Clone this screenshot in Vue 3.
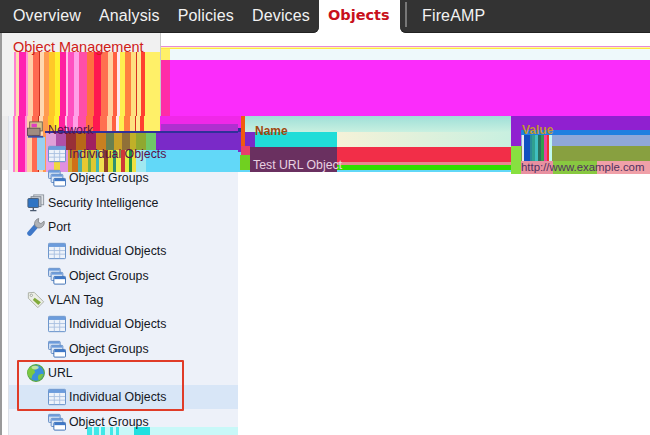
<template>
  <div class="page">
    <nav class="topbar">
      <div class="nav-left">
        <a class="tab">Overview</a>
        <a class="tab">Analysis</a>
        <a class="tab">Policies</a>
        <a class="tab">Devices</a>
      </div>
      <a class="tab-active">Objects</a>
      <div class="nav-right">
        <span class="divider"></span>
        <a class="tab">FireAMP</a>
      </div>
    </nav>

    <div class="head-row">
      <div class="title-box">
        <div class="title-stripes" :style="{ background: stripeBg(titleStripes) }"></div>
        <h1>Object Management</h1>
      </div>
      <div class="banner">
        <div class="banner-line"></div>
        <div class="banner-pale"></div>
        <div class="banner-fill"></div>
      </div>
    </div>

    <div class="main-row">
      <aside class="sidebar">
        <div class="tree-glitch" :style="{ background: stripeBg(titleStripes) }">
          <div class="glitch-right"></div>
          <div class="glitch-blue"></div>
          <div class="glitch-mid" :style="{ background: stripeBg(midStripes) }"></div>
          <div class="glitch-low" :style="{ background: stripeBg(lowStripes) }"></div>
          <div class="glitch-side"></div>
        </div>
        <div class="foot-glitch" :style="{ background: stripeBg(footStripes) }"></div>
        <div
          v-for="row in rows"
          :key="row.id"
          class="tree-row"
          :class="{ child: row.child, selected: row.selected, garbled: row.garbled }"
        >
          <svg class="icon" viewBox="0 0 20 20">
            <template v-if="row.icon === 'table'">
              <rect x="0.5" y="1.500" width="19" height="17" rx="1" fill="#eef3fa" stroke="#5584c4" />
              <rect x="1" y="2" width="18" height="3.500" fill="#6c9cdc" />
              <path d="M7 6v12M13 6v12M1 9.500h18M1 13.500h18" stroke="#a8c0e0" fill="none" />
            </template>
            <template v-else-if="row.icon === 'groups'">
              <rect x="0.5" y="1.500" width="13" height="9" rx="1" fill="#cfdef2" stroke="#5a86c2" />
              <rect x="1" y="2" width="12" height="2" fill="#6c9cdc" />
              <rect x="3.500" y="6" width="13" height="9" rx="1" fill="#dfe9f6" stroke="#5a86c2" />
              <rect x="4" y="6.500" width="12" height="2" fill="#6c9cdc" />
              <rect x="6.500" y="10.500" width="13" height="8.500" rx="1" fill="#fff" stroke="#2f66b0" />
              <rect x="7" y="11" width="12" height="2.500" fill="#3f78c8" />
            </template>
            <template v-else-if="row.icon === 'network'">
              <rect x="3" y="1" width="14" height="10" fill="#d8c48a" stroke="#6b5a4a" />
              <rect x="5" y="3" width="6" height="4" fill="#e040c0" />
              <rect x="0.5" y="8" width="14" height="8" fill="#a08c80" stroke="#5a4a50" />
              <path d="M1 17.500h17" stroke="#3a4fa8" stroke-width="2" />
            </template>
            <template v-else-if="row.icon === 'security'">
              <rect x="7.500" y="1" width="11" height="11" fill="#e0e3e8" stroke="#8a929c" />
              <rect x="4.500" y="3" width="11" height="11" fill="#c8cdd5" stroke="#7c848e" />
              <rect x="1" y="5" width="12" height="10" rx="1" fill="#2f74c4" stroke="#4a5a70" />
              <path d="M7 15v3M3.500 18.500h7" stroke="#4a5a70" stroke-width="1.500" />
            </template>
            <template v-else-if="row.icon === 'port'">
              <path d="M3 17 L11 8" stroke="#3f78c8" stroke-width="5.500" stroke-linecap="round" />
              <path d="M9 9 a6 6 0 0 1 4 -8.500 l-.5 4 3 1.800 3.500 -2.800 a6 6 0 0 1 -7 7.500z" fill="#b0b3b8" stroke="#77797d" stroke-width="0.800" />
            </template>
            <template v-else-if="row.icon === 'tag'">
              <path d="M1.500 2 L8 1.500 L18.500 12 L12 18.500 L1.500 8z" fill="#eceee6" stroke="#a8ada2" />
              <path d="M8.500 7.500 L15.500 12.500 L12.500 15.500 L6.500 10z" fill="#82ab3c" />
              <circle cx="4.800" cy="4.800" r="1.300" fill="#fff" stroke="#9a9f94" />
            </template>
            <template v-else>
              <circle cx="10" cy="10" r="9.300" fill="#3a90dc" stroke="#5aa838" stroke-width="1.200" />
              <path d="M4 3.500c3-2 6-2 8-1l-1 3-3 1 1 3-3 3-1 4c-3-2-4.500-5-4.500-8 0-2 2-4 3.500-5z" fill="#7cc840" />
              <path d="M13 12c2-1 4-1 5-1-.5 3-2.500 6-5 7-1-2-1-4 0-6z" fill="#7cc840" />
              <ellipse cx="9" cy="4" rx="4" ry="2" fill="#d8f0c8" opacity="0.7" />
            </template>
          </svg>
          <span>{{ row.label }}</span>
        </div>
        <div class="callout"></div>
      </aside>

      <section class="table-area">
        <div class="col-name">
          <div class="edge-orange"></div>
          <div class="edge-red"></div>
          <div class="edge-green"></div>
          <div class="band-teal">
            <strong class="th-name">Name</strong>
          </div>
          <div class="band-block">
            <div class="block-cyan"></div>
            <div class="block-cream"></div>
          </div>
          <div class="band-red"></div>
          <div class="band-row"></div>
          <div class="block-maroon">
            <span class="cell-name">Test URL Object</span>
          </div>
        </div>
        <div class="col-value">
          <div class="value-top"></div>
          <div class="value-blue"></div>
          <div class="value-mid">
            <div class="value-stripes" :style="{ background: stripeBg(valueStripes) }"></div>
            <strong class="th-value">Value</strong>
          </div>
          <div class="value-row">
            <span>http://www.example.com</span>
          </div>
        </div>
      </section>
    </div>
  </div>
</template>

<script setup>
const rows = [
  { id: 1, label: 'Network', icon: 'network', garbled: true },
  { id: 2, label: 'Individual Objects', icon: 'table', child: true, garbled: true },
  { id: 3, label: 'Object Groups', icon: 'groups', child: true },
  { id: 4, label: 'Security Intelligence', icon: 'security' },
  { id: 5, label: 'Port', icon: 'port' },
  { id: 6, label: 'Individual Objects', icon: 'table', child: true },
  { id: 7, label: 'Object Groups', icon: 'groups', child: true },
  { id: 8, label: 'VLAN Tag', icon: 'tag' },
  { id: 9, label: 'Individual Objects', icon: 'table', child: true },
  { id: 10, label: 'Object Groups', icon: 'groups', child: true },
  { id: 11, label: 'URL', icon: 'globe' },
  { id: 12, label: 'Individual Objects', icon: 'table', child: true, selected: true },
  { id: 13, label: 'Object Groups', icon: 'groups', child: true }
]

// [width, colour] pairs read off the reference, left to right
const titleStripes = [
  [2, '#ff7fd0'], [3, '#ffd9b0'], [7, '#ff22b0'], [2, '#ff90d8'], [5, '#ffd0a8'],
  [6, '#ff6a50'], [1, '#c83020'], [4, '#ffd8b0'], [5, '#ff9a50'], [6, '#ffc828'],
  [5, '#fff030'], [6, '#ff20a0'], [2, '#ffc0e8'], [6, '#ff50c0'], [5, '#ffa0e8'],
  [8, '#ff4ea8'], [7, '#ff7040'], [7, '#ff1850'], [7, '#ff7050'], [5, '#ffd0a0'],
  [4, '#ff6040'], [3, '#ffe8f0'], [5, '#ffef50'], [6, '#ff8040'], [5, '#ffe080'],
  [1, '#d83020'], [4, '#ffe890'], [4, '#ff4030'], [16, '#fff068'], [77, '#f028e8']
]
const midStripes = [
  [10, '#e0a0d8'], [10, '#b050a8'], [10, '#983038'], [10, '#b86818'], [10, '#a02060'],
  [10, '#c88020'], [8, '#688050'], [8, '#c8a028'], [8, '#907038'], [6, '#c0b028'],
  [10, '#90a830'], [10, '#70c868'], [83, '#7a2ac8']
]
const lowStripes = [
  [8, '#e8a0e8'], [6, '#f0d840'], [8, '#e090e0'], [4, '#d0a830'], [6, '#d07018'],
  [4, '#50b0a0'], [6, '#e8c830'], [3, '#70b048'], [5, '#e0c830'], [3, '#40b8b0'],
  [5, '#f0e050'], [4, '#904028'], [5, '#d8e030'], [3, '#309070'], [5, '#e8f050'],
  [4, '#d03838'], [4, '#e0f040'], [3, '#209040'], [4, '#f0e040'], [10, '#a0e8f0'],
  [93, '#62d8f8']
]
const footStripes = [
  [5, '#40e8e8'], [2, '#c8f8f8'], [5, '#40e8e8'], [2, '#c8f8f8'], [4, '#40e8e8'],
  [5, '#c8f8f8'], [3, '#40e8e8'], [3, '#c8f8f8'], [3, '#40e8e8'], [15, '#c8f8f8'],
  [16, '#20e0e0'], [90, '#c8f8f8']
]
const valueStripes = [
  [2, '#e8e8f0'], [6, '#1050c0'], [2, '#2a8a98'], [3, '#30a090'], [3, '#40c0c0'],
  [3, '#2a7060'], [3, '#30a050'], [3, '#f040a0'], [2, '#f03030'], [3, '#c0f8f0']
]

// hard-stop gradient from the stripe list
function stripeBg(stripes) {
  let pos = 0
  const stops = stripes.map(([w, c]) => {
    const part = `${c} ${pos}px ${pos + w}px`
    pos += w
    return part
  })
  return `linear-gradient(90deg, ${stops.join(', ')})`
}
</script>

<style>
html,
body {
  margin: 0;
  background: #fff;
}
</style>

<style scoped>
.page {
  width: 650px;
  height: 435px;
  overflow: hidden;
  display: flex;
  flex-direction: column;
  font-family: "Liberation Sans", Arial, sans-serif;
  color: #14181f;
}

.topbar {
  flex: none;
  height: 33px;
  display: flex;
  background: #fff;
  color: #f2f2f2;
  font-size: 16px;
  letter-spacing: 0.150px;
}

.nav-left,
.nav-right {
  display: flex;
  align-items: center;
  background: #333;
  box-shadow: inset 0 -1px 0 #222;
}

.nav-left {
  width: 319px;
  box-sizing: border-box;
  padding-left: 13px;
  border-bottom-right-radius: 6px;
}

.nav-right {
  flex: 1;
  padding-left: 5px;
  border-bottom-left-radius: 6px;
}

.tab {
  margin-right: 18px;
  padding-bottom: 1px;
}

.tab-active {
  width: 81px;
  box-sizing: border-box;
  padding: 0 0 3px 9px;
  display: flex;
  align-items: center;
  color: #c8101c;
  font-family: "DejaVu Sans", sans-serif;
  font-size: 14.500px;
  font-weight: 700;
  letter-spacing: 0;
}

.divider {
  width: 2px;
  height: 25px;
  margin: 0 15px 5px 0;
  background: #777;
}

.head-row {
  flex: none;
  height: 83px;
  display: flex;
}

.title-box {
  position: relative;
  width: 161px;
  flex: none;
  box-sizing: border-box;
  background: #f1f1f1;
  border-left: 2px solid #9a9a9a;
  border-right: 1px solid #c8c8c8;
}

.title-stripes {
  position: absolute;
  left: 12px;
  top: 19px;
  right: 0;
  bottom: 0;
}

h1 {
  position: relative;
  margin: 0;
  padding: 7px 0 0 11px;
  font-size: 14.500px;
  font-weight: 400;
  line-height: 14px;
  color: #d02018;
  white-space: nowrap;
}

.banner {
  flex: 1;
  display: flex;
  flex-direction: column;
  padding-top: 13px;
  box-sizing: border-box;
}

.banner-line {
  height: 3px;
  background: linear-gradient(#e888d8 0 1px, #fff8a0 1px 2px, #ffe840 2px);
}

.banner-pale {
  height: 11px;
  background: linear-gradient(90deg, #fff068 0 9px, #eef9fb 9px);
}

.banner-fill {
  flex: 1;
  background: linear-gradient(90deg, #ff2ca8 0 9px, #fb2cfb 9px);
}

.main-row {
  flex: 1;
  min-height: 0;
  display: flex;
}

.sidebar {
  position: relative;
  flex: none;
  box-sizing: border-box;
  margin-left: 8px;
  width: 230px;
  padding-top: 1.500px;
  background: #edf1f9;
  border-left: 1px solid #dde1e8;
}

/* grey page edge, paler strip beside the glitched part */
.sidebar::before {
  content: "";
  position: absolute;
  left: -9px;
  top: 0;
  bottom: 0;
  width: 2px;
  background: #9a9a9a;
}

.sidebar::after {
  content: "";
  position: absolute;
  left: -7px;
  top: 0;
  height: 54px;
  width: 6px;
  background: #ececec;
}

.tree-glitch {
  position: absolute;
  left: 4px;
  right: 0;
  top: 0;
  height: 56px;
}

.glitch-right {
  position: absolute;
  left: 148px;
  right: 0;
  top: 8px;
  height: 8px;
  background: #b030d0;
}

.glitch-blue {
  position: absolute;
  left: 32px;
  right: 0;
  top: 15px;
  height: 2px;
  background: #30309a;
}

.glitch-mid {
  position: absolute;
  left: 33px;
  right: 0;
  top: 17px;
  height: 17px;
}

.glitch-low {
  position: absolute;
  left: 33px;
  right: 0;
  top: 34px;
  height: 22px;
}

.glitch-side {
  position: absolute;
  left: 24px;
  top: 21px;
  width: 8px;
  bottom: 2px;
  background: #98d0f0;
}

.tree-row {
  position: relative;
  height: 24.330px;
  box-sizing: border-box;
  display: flex;
  align-items: center;
  gap: 3px;
  padding-left: 18px;
  font-size: 12.350px;
  white-space: nowrap;
}

.tree-row.child {
  padding-left: 39px;
}

.tree-row.selected {
  background: #d8e6f7;
}

.tree-row.garbled {
  color: #5a1048;
}

.icon {
  width: 18px;
  height: 18px;
  flex: none;
}

.foot-glitch {
  position: absolute;
  left: 78px;
  right: 0;
  top: 311px;
  height: 9px;
}

.callout {
  position: absolute;
  left: 8px;
  top: 244px;
  width: 163px;
  height: 47px;
  border: 2px solid #e03c28;
  border-radius: 1px;
}

.table-area {
  flex: 1;
  min-width: 0;
  height: 56px;
  display: flex;
  padding-left: 3px;
  background: linear-gradient(#f028e8 0 12px, #30309a 12px 16px, #7a2ac8 16px 36px, #62d8f8 36px);
}

.col-name {
  position: relative;
  width: 270px;
  flex: none;
  display: flex;
  flex-direction: column;
  padding-left: 4px;
  box-sizing: border-box;
}

.edge-orange {
  position: absolute;
  left: 0;
  top: 0;
  width: 4px;
  height: 30px;
  background: #f05a10;
}

.edge-red {
  position: absolute;
  left: 0;
  top: 30px;
  width: 9px;
  height: 9px;
  background: #e8406a;
}

.edge-green {
  position: absolute;
  left: -1px;
  top: 39px;
  width: 10px;
  height: 15px;
  background: #70d020;
}

.band-teal {
  position: relative;
  height: 16px;
  flex: none;
  background: linear-gradient(#9fdfd8, #c8f0e0);
}

.th-name {
  position: absolute;
  left: 10px;
  top: 8px;
  font-size: 12px;
  line-height: 14px;
  color: #a04810;
}

.band-block {
  height: 15px;
  flex: none;
  display: flex;
}

.block-cyan {
  width: 82px;
  margin-left: 10px;
  background: #20ddd8;
}

.block-cream {
  flex: 1;
  background: linear-gradient(90deg, #f5f2d8, #c8f0e0);
}

.band-red {
  height: 15px;
  flex: none;
  background: #f22e48;
}

.band-row {
  flex: none;
  height: 8px;
  background: linear-gradient(#e88890 0 3px, #30e000 3px);
}

/* dark block sits across the red and green bands, holds the row's text */
.block-maroon {
  position: absolute;
  left: 9px;
  width: 87px;
  top: 31px;
  height: 25px;
  display: flex;
  align-items: flex-end;
  background: #6a3060;
}

.cell-name {
  padding-left: 3px;
  font-size: 12.300px;
  line-height: 14px;
  color: #e8d0e0;
  white-space: nowrap;
}

.col-value {
  flex: 1;
  min-width: 0;
  display: flex;
  flex-direction: column;
  background: #9020d0;
}

.value-top {
  height: 14px;
  flex: none;
}

.value-blue {
  height: 5px;
  flex: none;
  margin-left: 10px;
  background: #1f80e0;
}

.value-mid {
  position: relative;
  height: 26px;
  flex: none;
  background: linear-gradient(#9020d0 0 11px, #88e040 11px);
}

.value-mid::after {
  content: "";
  position: absolute;
  left: 10px;
  right: 0;
  top: 0;
  bottom: 0;
  background: linear-gradient(#8fa8d8 0 11px, #88a040 11px);
}

.value-stripes {
  position: absolute;
  z-index: 1;
  left: 11px;
  top: 0;
  bottom: 0;
  width: 30px;
}

.th-value {
  position: absolute;
  z-index: 2;
  left: 11px;
  top: -11px;
  font-size: 12px;
  line-height: 12px;
  color: #c09830;
}

.value-row {
  flex: 1;
  display: flex;
  align-items: flex-end;
  padding-left: 10px;
  font-size: 11.400px;
  line-height: 13px;
  white-space: nowrap;
  color: #503060;
  background: linear-gradient(90deg, #88e040 0 10px, #e890a0 10px 42px, #88c840 42px 86px, #f0a0a8 86px);
}
</style>
